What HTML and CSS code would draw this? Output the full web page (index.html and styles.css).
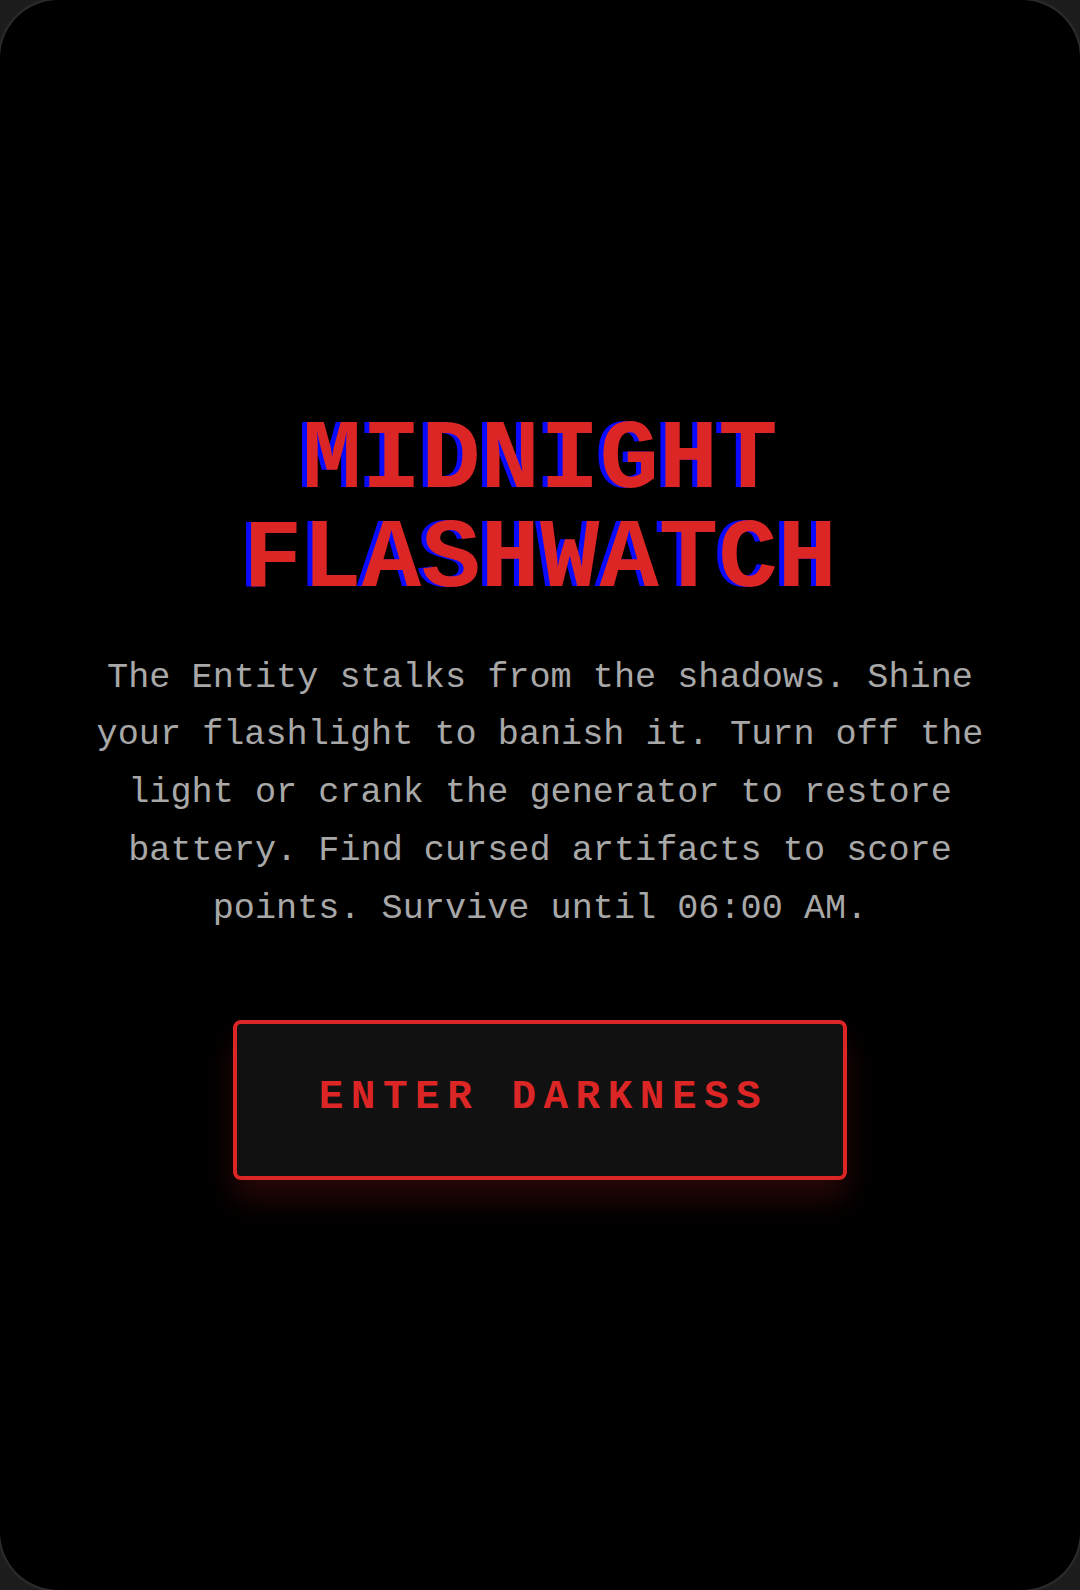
FILE: index.html
```html
<!DOCTYPE html>
<html lang="en">
<head>
<meta charset="utf-8">
<title>Midnight Flashwatch</title>
<link rel="stylesheet" href="styles.css">
</head>
<body>
<main class="screen">
  <section class="intro">
    <h1 class="title">MIDNIGHT<br>FLASHWATCH</h1>
    <p class="story">The Entity stalks from the shadows. Shine your flashlight to banish it. Turn off the light or crank the generator to restore battery. Find cursed artifacts to score points. Survive until 06:00 AM.</p>
    <button class="start-btn" type="button">ENTER DARKNESS</button>
  </section>
</main>
</body>
</html>
```

FILE: styles.css
```css
html, body {
  margin: 0;
  padding: 0;
  background: #1c1c1c;
  overflow: hidden;
}

.screen {
  box-sizing: border-box;
  width: 1080px;
  height: 1590px;
  background: #000;
  border-radius: 58px;
  box-shadow: 0 0 3px 1px rgba(255, 255, 255, 0.14);
  display: flex;
  align-items: center;
  justify-content: center;
  font-family: "Liberation Mono", "DejaVu Sans Mono", monospace;
}

.intro {
  display: flex;
  flex-direction: column;
  align-items: center;
  text-align: center;
  padding: 2px 60px 0;
}

.title {
  margin: 0;
  font-size: 99px;
  line-height: 1;
  font-weight: 700;
  color: #dc2626;
  text-shadow: -5px 0 0 #0a0aff;
}

.story {
  margin: 40px 0 0;
  max-width: 900px;
  font-size: 35.2px;
  line-height: 1.64;
  color: #a8a8a8;
}

.start-btn {
  margin-top: 82px;
  width: 614px;
  height: 160px;
  background: #111;
  border: 4px solid #dc2626;
  border-radius: 8px;
  color: #dc2626;
  font-family: "Liberation Mono", "DejaVu Sans Mono", monospace;
  font-size: 41px;
  font-weight: 700;
  letter-spacing: 7.5px;
  padding: 0 0 6px 7px;
  box-shadow: 0 20px 30px rgba(220, 38, 38, 0.18);
  cursor: pointer;
}
```
